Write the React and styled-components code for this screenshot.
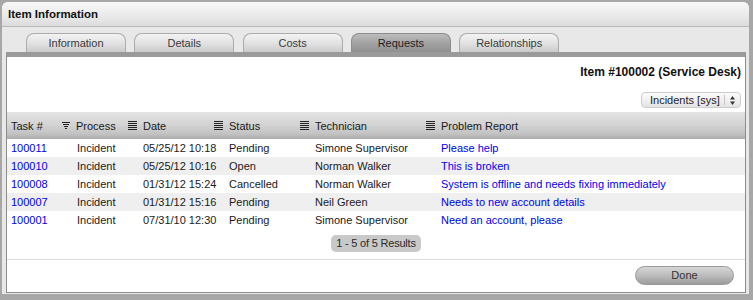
import React from "react";
import styled, { createGlobalStyle } from "styled-components";

const Global = createGlobalStyle`
  html, body { margin: 0; padding: 0; }
  body {
    background: #a7a7a7;
    width: 753px;
    height: 300px;
    overflow: hidden;
    font-family: "Liberation Sans", Arial, sans-serif;
  }
  #root { height: 300px; }
`;

const Window = styled.div`
  margin: 2px 4px 6px 2px;
  height: 292px;
  background: #e8e8e8;
  border-radius: 6px 6px 0 0;
  display: flex;
  flex-direction: column;
  overflow: hidden;
`;

const TitleBar = styled.div`
  height: 24px;
  flex: none;
  border-bottom: 1px solid #b7b7b7;
  background: linear-gradient(to bottom, #f7f7f7 0%, #ececec 50%, #dcdcdc 100%);
  padding-left: 6px;
  font: bold 11.5px/24px "Liberation Sans", Arial, sans-serif;
  color: #111;
`;

const TabBar = styled.div`
  height: 25px;
  flex: none;
  box-sizing: border-box;
  padding: 6px 0 0 24px;
  display: flex;
  gap: 8.3px;
  align-items: flex-end;
`;

const Tab = styled.div`
  width: 100px;
  height: 19px;
  box-sizing: border-box;
  border: 1px solid ${(p) => (p.$active ? "#8c8c8c" : "#acacac")};
  border-bottom: none;
  border-radius: 8px 8px 0 0;
  background: ${(p) =>
    p.$active
      ? "linear-gradient(to bottom, #bdbdbd 0%, #a3a3a3 50%, #8f8f8f 100%)"
      : "linear-gradient(to bottom, #f3f3f3 0%, #e2e2e2 50%, #cbcbcb 100%)"};
  color: ${(p) => (p.$active ? "#222" : "#3a3a3a")};
  font: 11px/18px "Liberation Sans", Arial, sans-serif;
  text-align: center;
`;

const Panel = styled.div`
  flex: 1;
  margin: 0 3px 1px 4px;
  background: #fff;
  border: 1px solid #8c8c8c;
  border-top: 5px solid #9a9a9a;
  display: flex;
  flex-direction: column;
`;

const ItemLine = styled.div`
  padding: 8px 4px 0 0;
  text-align: right;
  font: bold 12px/14px "Liberation Sans", Arial, sans-serif;
  color: #111;
`;

const SelectRow = styled.div`
  display: flex;
  justify-content: flex-end;
  padding-right: 4px;
  margin-top: 13px;
`;

const SelectBox = styled.div`
  width: 100px;
  height: 16px;
  box-sizing: border-box;
  border: 1px solid #cdcdcd;
  border-radius: 4px;
  background: linear-gradient(to bottom, #fbfbfb 0%, #eeeeee 60%, #e3e3e3 100%);
  display: flex;
  align-items: center;
  font: 11px "Liberation Sans", Arial, sans-serif;
  color: #222;
`;

const SelectText = styled.span`
  flex: 1;
  padding-left: 8px;
  line-height: 14px;
  white-space: nowrap;
`;

const SelectArrow = styled.span`
  width: 15px;
  height: 10px;
  border-left: 1px solid #c4c4c4;
  display: flex;
  align-items: center;
  justify-content: center;
`;

const Table = styled.div`
  margin-top: 4px;
  display: flex;
  flex-direction: column;
`;

const Row = styled.div`
  display: grid;
  grid-template-columns: 52px 66px 86px 86px 126px 1fr;
  height: ${(p) => (p.$head ? "27px" : "18px")};
  background: ${(p) =>
    p.$head
      ? "linear-gradient(to bottom, #e3e3e3 0%, #d4d4d4 45%, #c3c3c3 80%, #acacac 100%)"
      : p.$alt
      ? "#efefef"
      : "#ffffff"};
`;

const HeadCell = styled.div`
  display: flex;
  align-items: center;
  padding-left: ${(p) => (p.$first ? "4px" : "3px")};
  font: 11px "Liberation Sans", Arial, sans-serif;
  color: #1a1a1a;
  white-space: nowrap;
`;

const Cell = styled.div`
  padding-left: ${(p) => (p.$first ? "4px" : "18px")};
  font: 11px/18px "Liberation Sans", Arial, sans-serif;
  color: ${(p) => (p.$link ? "#0000ee" : "#1a1a1a")};
  white-space: nowrap;
  min-width: 0;
`;

const IconWrap = styled.span`
  display: inline-flex;
  margin-right: 6px;
`;

const Pager = styled.div`
  align-self: center;
  margin: 6px 0 0 0;
  width: 90px;
  height: 17px;
  border-radius: 5px;
  background: #c9c9c9;
  text-align: center;
  font: 11px/17px "Liberation Sans", Arial, sans-serif;
  letter-spacing: -0.2px;
  color: #2a2a2a;
`;

const Footer = styled.div`
  margin-top: 7px;
  border-top: 1px solid #dcdcdc;
  padding: 6px 11px 0 0;
  display: flex;
  justify-content: flex-end;
`;

const DoneButton = styled.div`
  width: 99px;
  height: 19px;
  box-sizing: border-box;
  border-radius: 10px;
  border: 1px solid #9a9a9a;
  background: linear-gradient(to bottom, #d6d6d6 0%, #bcbcbc 50%, #9c9c9c 100%);
  text-align: center;
  font: 11px/17px "Liberation Sans", Arial, sans-serif;
  color: #333;
`;

const SortedIcon = () => (
  <svg width="8" height="9" viewBox="0 0 8 9">
    <rect x="0" y="1" width="8" height="1" fill="#222" />
    <rect x="1" y="3" width="6" height="1" fill="#222" />
    <rect x="2" y="5" width="4" height="1" fill="#222" />
    <rect x="3" y="7" width="2" height="1" fill="#222" />
  </svg>
);

const ListIcon = () => (
  <svg width="9" height="9" viewBox="0 0 9 9">
    {[0, 2, 4, 6, 8].map((y) => (
      <rect key={y} x="0" y={y} width="9" height="1" fill="#222" />
    ))}
  </svg>
);

const UpDown = () => (
  <svg width="5" height="9" viewBox="0 0 5 9">
    <path d="M2.5 0 L5 3.5 L0 3.5 Z" fill="#333" />
    <path d="M2.5 9 L5 5.5 L0 5.5 Z" fill="#333" />
  </svg>
);

const tabs = ["Information", "Details", "Costs", "Requests", "Relationships"];

const headers = [
  { label: "Task #", icon: null },
  { label: "Process", icon: "sorted" },
  { label: "Date", icon: "list" },
  { label: "Status", icon: "list" },
  { label: "Technician", icon: "list" },
  { label: "Problem Report", icon: "list" },
];

const rows = [
  ["100011", "Incident", "05/25/12 10:18", "Pending", "Simone Supervisor", "Please help"],
  ["100010", "Incident", "05/25/12 10:16", "Open", "Norman Walker", "This is broken"],
  ["100008", "Incident", "01/31/12 15:24", "Cancelled", "Norman Walker", "System is offline and needs fixing immediately"],
  ["100007", "Incident", "01/31/12 15:16", "Pending", "Neil Green", "Needs to new account details"],
  ["100001", "Incident", "07/31/10 12:30", "Pending", "Simone Supervisor", "Need an account, please"],
];

export default function App() {
  return (
    <>
      <Global />
      <Window>
        <TitleBar>Item Information</TitleBar>
        <TabBar>
          {tabs.map((t) => (
            <Tab key={t} $active={t === "Requests"}>
              {t}
            </Tab>
          ))}
        </TabBar>
        <Panel>
          <ItemLine>Item #100002 (Service Desk)</ItemLine>
          <SelectRow>
            <SelectBox>
              <SelectText>Incidents [sys]</SelectText>
              <SelectArrow>
                <UpDown />
              </SelectArrow>
            </SelectBox>
          </SelectRow>
          <Table>
            <Row $head>
              {headers.map((h, i) => (
                <HeadCell key={h.label} $first={i === 0}>
                  {h.icon && (
                    <IconWrap>{h.icon === "sorted" ? <SortedIcon /> : <ListIcon />}</IconWrap>
                  )}
                  {h.label}
                </HeadCell>
              ))}
            </Row>
            {rows.map((r, ri) => (
              <Row key={r[0]} $alt={ri % 2 === 1}>
                {r.map((c, ci) => (
                  <Cell key={ci} $first={ci === 0} $link={ci === 0 || ci === 5}>
                    {c}
                  </Cell>
                ))}
              </Row>
            ))}
          </Table>
          <Pager>1 - 5 of 5 Results</Pager>
          <Footer>
            <DoneButton>Done</DoneButton>
          </Footer>
        </Panel>
      </Window>
    </>
  );
}
